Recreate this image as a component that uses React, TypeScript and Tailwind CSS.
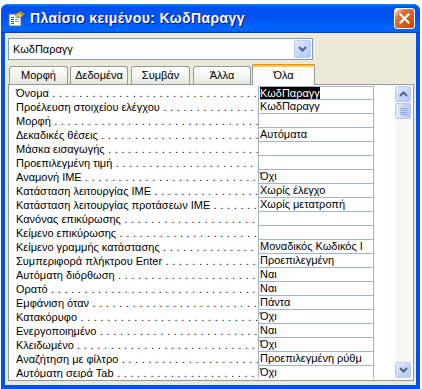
import React from "react";

const rows: [string, string][] = [
  ["Όνομα", "ΚωδΠαραγγ"],
  ["Προέλευση στοιχείου ελέγχου", "ΚωδΠαραγγ"],
  ["Μορφή", ""],
  ["Δεκαδικές θέσεις", "Αυτόματα"],
  ["Μάσκα εισαγωγής", ""],
  ["Προεπιλεγμένη τιμή", ""],
  ["Αναμονή IME", "Όχι"],
  ["Κατάσταση λειτουργίας IME", "Χωρίς έλεγχο"],
  ["Κατάσταση λειτουργίας προτάσεων IME", "Χωρίς μετατροπή"],
  ["Κανόνας επικύρωσης", ""],
  ["Κείμενο επικύρωσης", ""],
  ["Κείμενο γραμμής κατάστασης", "Μοναδικός Κωδικός Ι"],
  ["Συμπεριφορά πλήκτρου Enter", "Προεπιλεγμένη"],
  ["Αυτόματη διόρθωση", "Ναι"],
  ["Ορατό", "Ναι"],
  ["Εμφάνιση όταν", "Πάντα"],
  ["Κατακόρυφο", "Όχι"],
  ["Ενεργοποιημένο", "Ναι"],
  ["Κλειδωμένο", "Όχι"],
  ["Αναζήτηση με φίλτρο", "Προεπιλεγμένη ρύθμ"],
  ["Αυτόματη σειρά Tab", "Όχι"],
];

const tabs = [
  { name: "Μορφή", w: "w-[59px]", ml: "ml-[1px]" },
  { name: "Δεδομένα", w: "w-[58px]", ml: "ml-[2px]" },
  { name: "Συμβάν", w: "w-[59px]", ml: "ml-[3px]" },
  { name: "Άλλα", w: "w-[58px]", ml: "ml-[3px]" },
];

const dots = " . . . . . . . . . . . . . . . . . . . . . . . . . . . . . . . . . . . . . . . . . .";

const Chevron = ({ up }: { up?: boolean }) => (
  <svg width="9" height="6" viewBox="0 0 9 6">
    <polyline
      points={up ? "1,5 4.5,1.5 8,5" : "1,1 4.5,4.5 8,1"}
      fill="none"
      stroke="#4D6185"
      strokeWidth="2"
    />
  </svg>
);

const ScrollButton = ({ up }: { up?: boolean }) => (
  <div className="w-[16px] h-[16px] rounded-[2px] border border-[#B9CBF3] bg-[linear-gradient(135deg,#E3EBFE,#C4D4F9_60%,#B5C8F5)] flex items-center justify-center">
    <Chevron up={up} />
  </div>
);

const PropIcon = () => (
  <svg width="17" height="16" viewBox="0 0 17 16">
    <rect x="1" y="3" width="12" height="12" fill="#fff" stroke="#5A6E8C" />
    <rect x="3" y="6" width="3" height="1" fill="#2F5BB5" />
    <rect x="7" y="6" width="4" height="1" fill="#8A9AB4" />
    <rect x="3" y="8" width="3" height="1" fill="#2F5BB5" />
    <rect x="7" y="8" width="4" height="1" fill="#8A9AB4" />
    <rect x="3" y="10" width="3" height="1" fill="#2F5BB5" />
    <rect x="7" y="10" width="4" height="1" fill="#8A9AB4" />
    <rect x="3" y="12" width="3" height="1" fill="#2F5BB5" />
    <path d="M7 4 L12 0.5 L16.5 3 L12 7 Z" fill="#E8C84A" stroke="#8A7A22" strokeWidth="0.8" />
    <path d="M11 2 L15 4" stroke="#5E9E2E" strokeWidth="1.2" />
  </svg>
);

export default function App() {
  return (
    <div className="w-[422px] h-[389px] bg-white pt-[4px] pl-[1px] pr-[2px] flex flex-col font-['Liberation_Sans',Arial,sans-serif] text-[11px] text-black">
      <div className="flex-1 flex flex-col rounded-t-[7px] bg-[#0055E5] overflow-hidden">
        {/* title bar */}
        <div className="h-[29px] flex items-center pl-[7px] pr-[5px] bg-[linear-gradient(180deg,#0997ff,#0053ee_8%,#0050ee_40%,#06f_88%,#06f_93%,#005bff_95%,#003dd7_96%,#003dd7)]">
          <PropIcon />
          <span className="ml-[5px] text-white font-bold text-[14px] tracking-[0.4px] [text-shadow:1px_1px_#0F1089]">
            Πλαίσιο κειμένου: ΚωδΠαραγγ
          </span>
          <div className="ml-auto w-[21px] h-[21px] rounded-[3px] border border-white bg-[radial-gradient(circle_at_90%_90%,#cc4600,#dc6527_55%,#cd7546_70%,#ffccb2_90%,#fff)] flex items-center justify-center">
            <svg width="11" height="11" viewBox="0 0 11 11">
              <path d="M1.5 1.5 L9.5 9.5 M9.5 1.5 L1.5 9.5" stroke="#fff" strokeWidth="2.2" strokeLinecap="square" />
            </svg>
          </div>
        </div>

        {/* body */}
        <div className="flex-1 mx-[4px] mb-[4px] bg-[#ECE9D8] flex flex-col pb-[4px]">
          {/* combo */}
          <div className="mt-[5px] ml-[3px] w-[305px] h-[22px] bg-white border border-[#7F9DB9] flex items-center">
            <span className="pl-[4px] flex-1">ΚωδΠαραγγ</span>
            <div className="mr-[1px] w-[17px] h-[18px] rounded-[2px] border border-[#B9CBF3] bg-[linear-gradient(135deg,#E3EBFE,#C4D4F9_60%,#B5C8F5)] flex items-center justify-center">
              <Chevron />
            </div>
          </div>

          {/* tabs */}
          <div className="mt-[4px] h-[20px] pl-[3px] flex items-end relative z-10">
            {tabs.map((t) => (
              <div
                key={t.name}
                className={`${t.w} ${t.ml} h-[18px] rounded-t-[3px] border border-b-0 border-[#919B9C] bg-[linear-gradient(180deg,#FFFFFF,#F3F3EF_60%,#E5E4DE)] flex items-center justify-center`}
              >
                {t.name}
              </div>
            ))}
            <div className="w-[63px] ml-[1px] h-[21px] -mb-[1px] rounded-t-[3px] border-x border-[#919B9C] bg-[#FCFCFE] flex flex-col">
              <div className="h-[1px] -mx-[1px] rounded-t-[3px] bg-[#E68B2C]" />
              <div className="h-[2px] bg-[#FFC73C]" />
              <div className="flex-1 flex items-center justify-center pb-[2px]">Όλα</div>
            </div>
          </div>

          {/* panel */}
          <div className="flex-1 ml-[3px] mr-[2px] border border-[#919B9C] bg-[#FCFCFE] p-[1px] flex flex-col">
            <div className="h-[292px] flex bg-white overflow-hidden">
              <div className="w-[364px] flex flex-col">
                {rows.map(([label, value], i) => (
                  <div key={label} className="flex h-[14px] shrink-0">
                    <div className="w-[248px] pl-[6px] pr-[2px] overflow-hidden whitespace-nowrap leading-[14px]">
                      {label}
                      <span className="tracking-[0.3px]">{dots}</span>
                    </div>
                    <div
                      className={`w-[116px] h-[14px] border-x border-b border-[#A3B4CA] ${
                        i === 0 ? "border-t" : ""
                      } pl-[1px] overflow-hidden whitespace-nowrap leading-[12px]`}
                    >
                      {i === 0 ? <span className="bg-black text-white">{value}</span> : value}
                    </div>
                  </div>
                ))}
              </div>
              <div className="w-[21px]" />
              <div className="w-[16px] flex flex-col bg-[#F7F7F2]">
                <ScrollButton up />
                <div className="mt-[1px] w-[16px] h-[16px] rounded-[2px] border border-[#B9CBF3] bg-[linear-gradient(90deg,#E3EBFE,#C4D4F9_60%,#B5C8F5)] flex flex-col items-center justify-center gap-[1px]">
                  <div className="w-[7px] h-[1px] bg-[#8DA6E0]" />
                  <div className="w-[7px] h-[1px] bg-[#8DA6E0]" />
                  <div className="w-[7px] h-[1px] bg-[#8DA6E0]" />
                  <div className="w-[7px] h-[1px] bg-[#8DA6E0]" />
                </div>
                <div className="flex-1" />
                <ScrollButton />
              </div>
            </div>
          </div>
        </div>
      </div>
    </div>
  );
}
